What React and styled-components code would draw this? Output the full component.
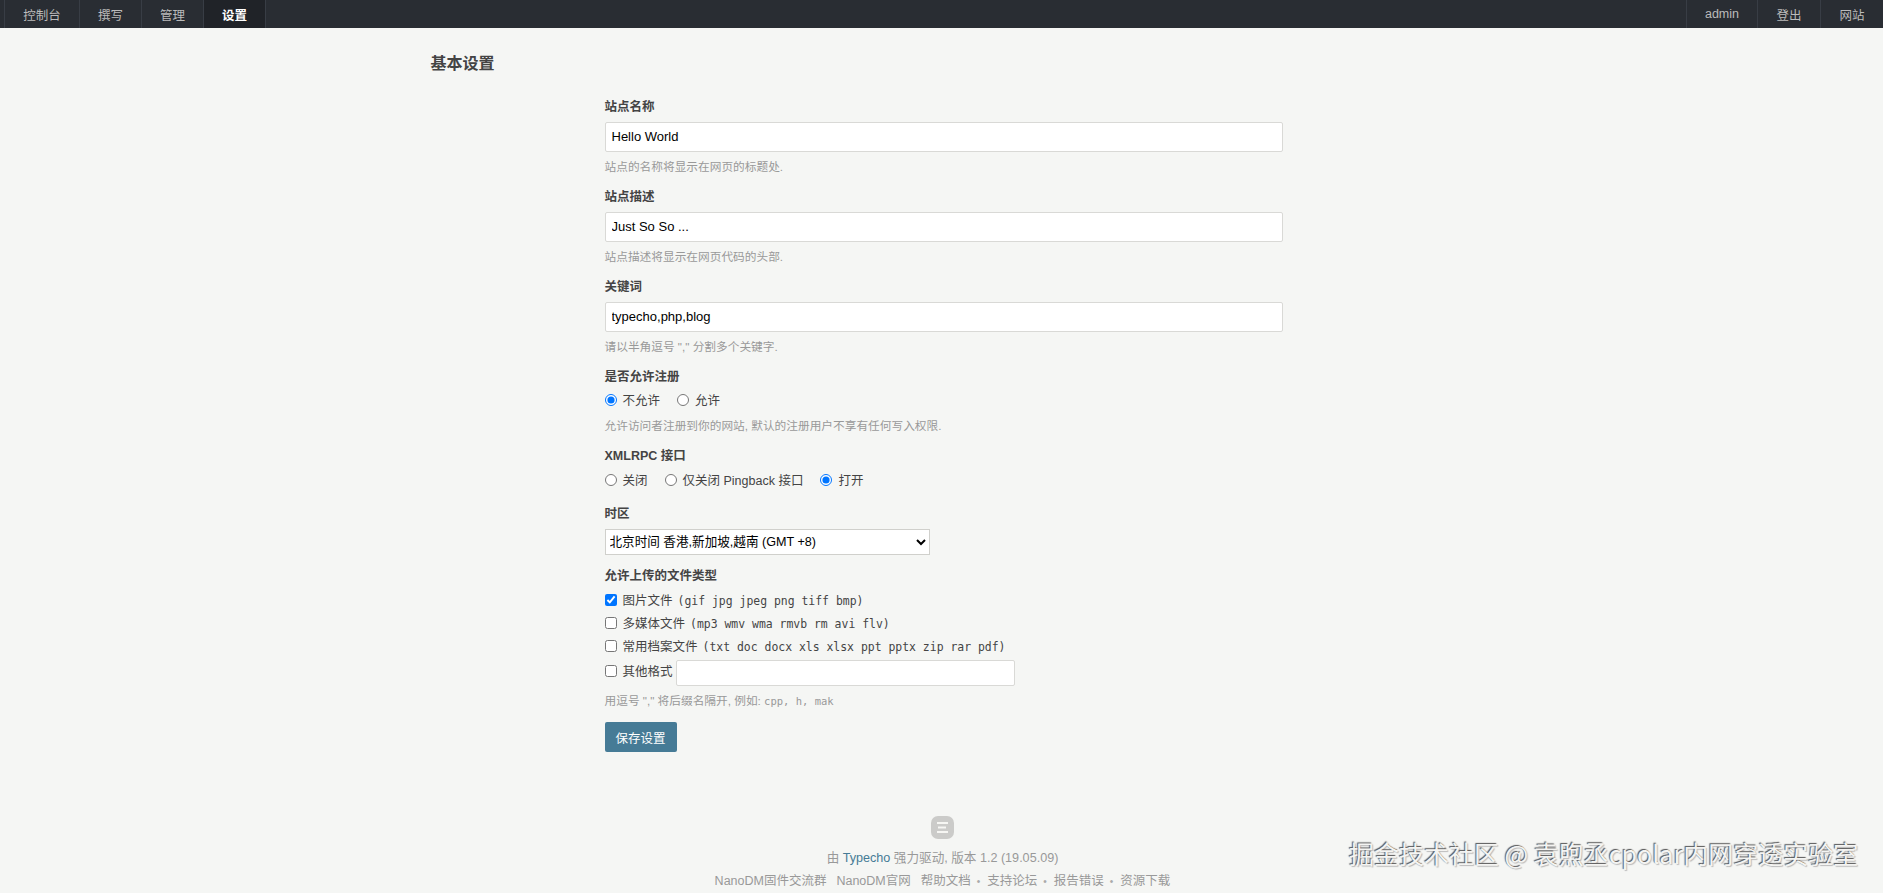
import React from "react";
import styled, { createGlobalStyle } from "styled-components";

const CJK = `"Liberation Sans", "Noto Sans CJK SC", sans-serif`;
const MONO = `"DejaVu Sans Mono", "Noto Sans CJK SC", monospace`;

const GlobalStyle = createGlobalStyle`
    html, body {
        margin: 0;
        padding: 0;
        background: #f5f6f4;
        color: #444;
        font-family: ${CJK};
        font-size: 12.5px;
    }
    * {
        box-sizing: border-box;
    }
`;

const Page = styled.div`
    position: relative;
    height: 893px;
    overflow: hidden;
`;

const NavBar = styled.nav`
    display: flex;
    justify-content: space-between;
    height: 28px;
    padding-left: 4px;
    background: #292d33;
`;

const NavGroup = styled.div`
    display: flex;
    border-left: 1px solid #383d45;
`;

const NavItem = styled.a`
    display: flex;
    align-items: center;
    justify-content: center;
    width: ${props => props.$width}px;
    height: 100%;
    border-right: 1px solid #383d45;
    background: ${props => props.$active ? "#202328" : "transparent"};
    color: ${props => props.$active ? "#fff" : "#bbb"};
    font-weight: ${props => props.$active ? 700 : 400};
    font-size: 12.5px;

    &:last-child {
        border-right: ${props => props.$flush ? "none" : "1px solid #383d45"};
    }
`;

const Container = styled.main`
    width: 1024px;
    margin: 0 auto;
    padding-left: 1px;
`;

const PageTitle = styled.h2`
    margin: 0;
    padding-top: 26px;
    height: 70px;
    font-size: 16px;
    line-height: 20px;
    font-weight: 700;
    color: #444;
`;

const SettingsForm = styled.form`
    width: 678px;
    margin-left: 174px;
`;

const Option = styled.div`
    padding-bottom: ${props => props.$gap ?? 13}px;
`;

const Label = styled.label`
    display: block;
    height: 18px;
    margin-bottom: ${props => props.$gap ?? 6}px;
    font-size: 12.5px;
    line-height: 18px;
    font-weight: 700;
    color: #444;
`;

const TextInput = styled.input`
    display: block;
    width: 100%;
    height: 30px;
    padding: 0 6px 2px;
    border: 1px solid #d9d9d6;
    border-radius: 2px;
    background: #fff;
    color: #000;
    font-family: ${CJK};
    font-size: 13px;
    outline: none;
`;

const Description = styled.p`
    margin: ${props => props.$top ?? 7}px 0 0;
    height: 16px;
    font-size: 11.7px;
    line-height: 16px;
    color: #999;
`;

const ChoiceRow = styled.div`
    display: flex;
    align-items: center;
    gap: ${props => props.$gap ?? 17}px;
    height: ${props => props.$height ?? 23}px;
`;

const Choice = styled.label`
    display: inline-flex;
    align-items: center;
    color: #444;
    font-size: 12.5px;
    line-height: 23px;
`;

const RadioBox = styled.input`
    width: 12px;
    height: 12px;
    margin: 0 6px 4px 0;
    accent-color: #0075ff;
`;

const Code = styled.code`
    font-family: ${MONO};
    font-size: 11.45px;
    margin-left: 5px;
`;

const InlineCode = styled.code`
    font-family: ${MONO};
    font-size: 10.5px;
`;

const OtherInput = styled(TextInput)`
    width: 339px;
    height: 26px;
    margin-left: 3px;
`;

const TimezoneSelect = styled.select`
    display: block;
    width: 325px;
    height: 26px;
    padding: 0;
    border: 1px solid #d0d0cc;
    border-radius: 0;
    background: #fff;
    color: #000;
    font-family: ${CJK};
    font-size: 12.6px;
`;

const SaveButton = styled.button`
    display: block;
    width: 72px;
    height: 30px;
    padding: 0;
    border: none;
    border-radius: 2px;
    background: #467b96;
    color: #fff;
    font-family: ${CJK};
    font-size: 12.5px;
`;

const Footer = styled.footer`
    position: absolute;
    left: 0;
    right: 0;
    top: 816px;
    padding-left: 2px;
    color: #999;
    font-size: 12.6px;
    line-height: 23px;
    text-align: center;
`;

const FooterLogo = styled.svg`
    display: block;
    width: 23px;
    height: 23px;
    margin: 0 auto 8px;
`;

const FooterLine = styled.div`
    white-space: pre;
`;

const FooterLink = styled.a`
    color: ${props => props.$accent ? "#467b96" : "#999"};
`;

const FooterMenuItem = styled.a`
    display: inline-block;
    color: #999;
    font-size: 12.5px;
    margin-left: ${props => props.$first ? 0 : 10}px;
`;

const FooterDot = styled.span`
    display: inline-block;
    margin-left: 6px;
    margin-right: -3px;
    font-size: 10px;
    color: #aaa;
`;

const Watermark = styled.div`
    position: absolute;
    left: 1349px;
    top: 836px;
    color: #f4f4f2;
    font-family: "Noto Sans CJK SC", sans-serif;
    font-size: 25px;
    line-height: 34px;
    white-space: nowrap;
    text-shadow: -1px -1px 1px #555, 1px 1px 1px #bbb;
`;

const textFields = [
    ["站点名称", "Hello World", "站点的名称将显示在网页的标题处."],
    ["站点描述", "Just So So ...", "站点描述将显示在网页代码的头部."],
    ["关键词", "typecho,php,blog", "请以半角逗号 \",\" 分割多个关键字."],
];

const fileTypes = [
    ["图片文件", "(gif jpg jpeg png tiff bmp)", true],
    ["多媒体文件", "(mp3 wmv wma rmvb rm avi flv)", false],
    ["常用档案文件", "(txt doc docx xls xlsx ppt pptx zip rar pdf)", false],
];

const App = () => {
    return (
        <Page>
            <GlobalStyle />
            <NavBar>
                <NavGroup>
                    <NavItem $width={75}>控制台</NavItem>
                    <NavItem $width={62}>撰写</NavItem>
                    <NavItem $width={62}>管理</NavItem>
                    <NavItem $width={62} $active>设置</NavItem>
                </NavGroup>
                <NavGroup>
                    <NavItem $width={71}>admin</NavItem>
                    <NavItem $width={63}>登出</NavItem>
                    <NavItem $width={62} $flush>网站</NavItem>
                </NavGroup>
            </NavBar>
            <Container>
                <PageTitle>基本设置</PageTitle>
                <SettingsForm>
                    {textFields.map(([label, value, description]) => (
                        <Option key={label}>
                            <Label>{label}</Label>
                            <TextInput defaultValue={value} />
                            <Description>{description}</Description>
                        </Option>
                    ))}
                    <Option>
                        <Label $gap={4}>是否允许注册</Label>
                        <ChoiceRow>
                            <Choice><RadioBox type="radio" name="register" defaultChecked />不允许</Choice>
                            <Choice><RadioBox type="radio" name="register" />允许</Choice>
                        </ChoiceRow>
                        <Description $top={5}>允许访问者注册到你的网站, 默认的注册用户不享有任何写入权限.</Description>
                    </Option>
                    <Option $gap={12}>
                        <Label $gap={5}>XMLRPC 接口</Label>
                        <ChoiceRow>
                            <Choice><RadioBox type="radio" name="xmlrpc" />关闭</Choice>
                            <Choice><RadioBox type="radio" name="xmlrpc" />仅关闭 Pingback 接口</Choice>
                            <Choice><RadioBox type="radio" name="xmlrpc" defaultChecked />打开</Choice>
                        </ChoiceRow>
                    </Option>
                    <Option $gap={12}>
                        <Label $gap={6}>时区</Label>
                        <TimezoneSelect defaultValue="8">
                            <option value="8">北京时间 香港,新加坡,越南 (GMT +8)</option>
                        </TimezoneSelect>
                    </Option>
                    <Option>
                        <Label $gap={5}>允许上传的文件类型</Label>
                        {fileTypes.map(([name, types, checked]) => (
                            <ChoiceRow key={name}>
                                <Choice>
                                    <RadioBox type="checkbox" defaultChecked={checked} />
                                    {name}<Code>{types}</Code>
                                </Choice>
                            </ChoiceRow>
                        ))}
                        <ChoiceRow $gap={0} $height={27}>
                            <Choice><RadioBox type="checkbox" />其他格式</Choice>
                            <OtherInput />
                        </ChoiceRow>
                        <Description $top={7}>用逗号 "," 将后缀名隔开, 例如: <InlineCode>cpp, h, mak</InlineCode></Description>
                    </Option>
                    <SaveButton type="button">保存设置</SaveButton>
                </SettingsForm>
            </Container>
            <Footer>
                <FooterLogo viewBox="0 0 23 23">
                    <rect width="23" height="23" rx="7" fill="#cbcbc9" />
                    <path d="M6 7h11M7 11.5h8M6 16h11" stroke="#f6f6f3" strokeWidth="2" fill="none" />
                </FooterLogo>
                <FooterLine>由 <FooterLink $accent>Typecho</FooterLink> 强力驱动, 版本 1.2 (19.05.09)</FooterLine>
                <FooterLine>
                    <FooterMenuItem $first>NanoDM固件交流群</FooterMenuItem>
                    <FooterMenuItem>NanoDM官网</FooterMenuItem>
                    <FooterMenuItem>帮助文档</FooterMenuItem>
                    <FooterDot>•</FooterDot>
                    <FooterMenuItem>支持论坛</FooterMenuItem>
                    <FooterDot>•</FooterDot>
                    <FooterMenuItem>报告错误</FooterMenuItem>
                    <FooterDot>•</FooterDot>
                    <FooterMenuItem>资源下载</FooterMenuItem>
                </FooterLine>
            </Footer>
            <Watermark>掘金技术社区 @ 袁煦丞cpolar内网穿透实验室</Watermark>
        </Page>
    );
};

export default App;
